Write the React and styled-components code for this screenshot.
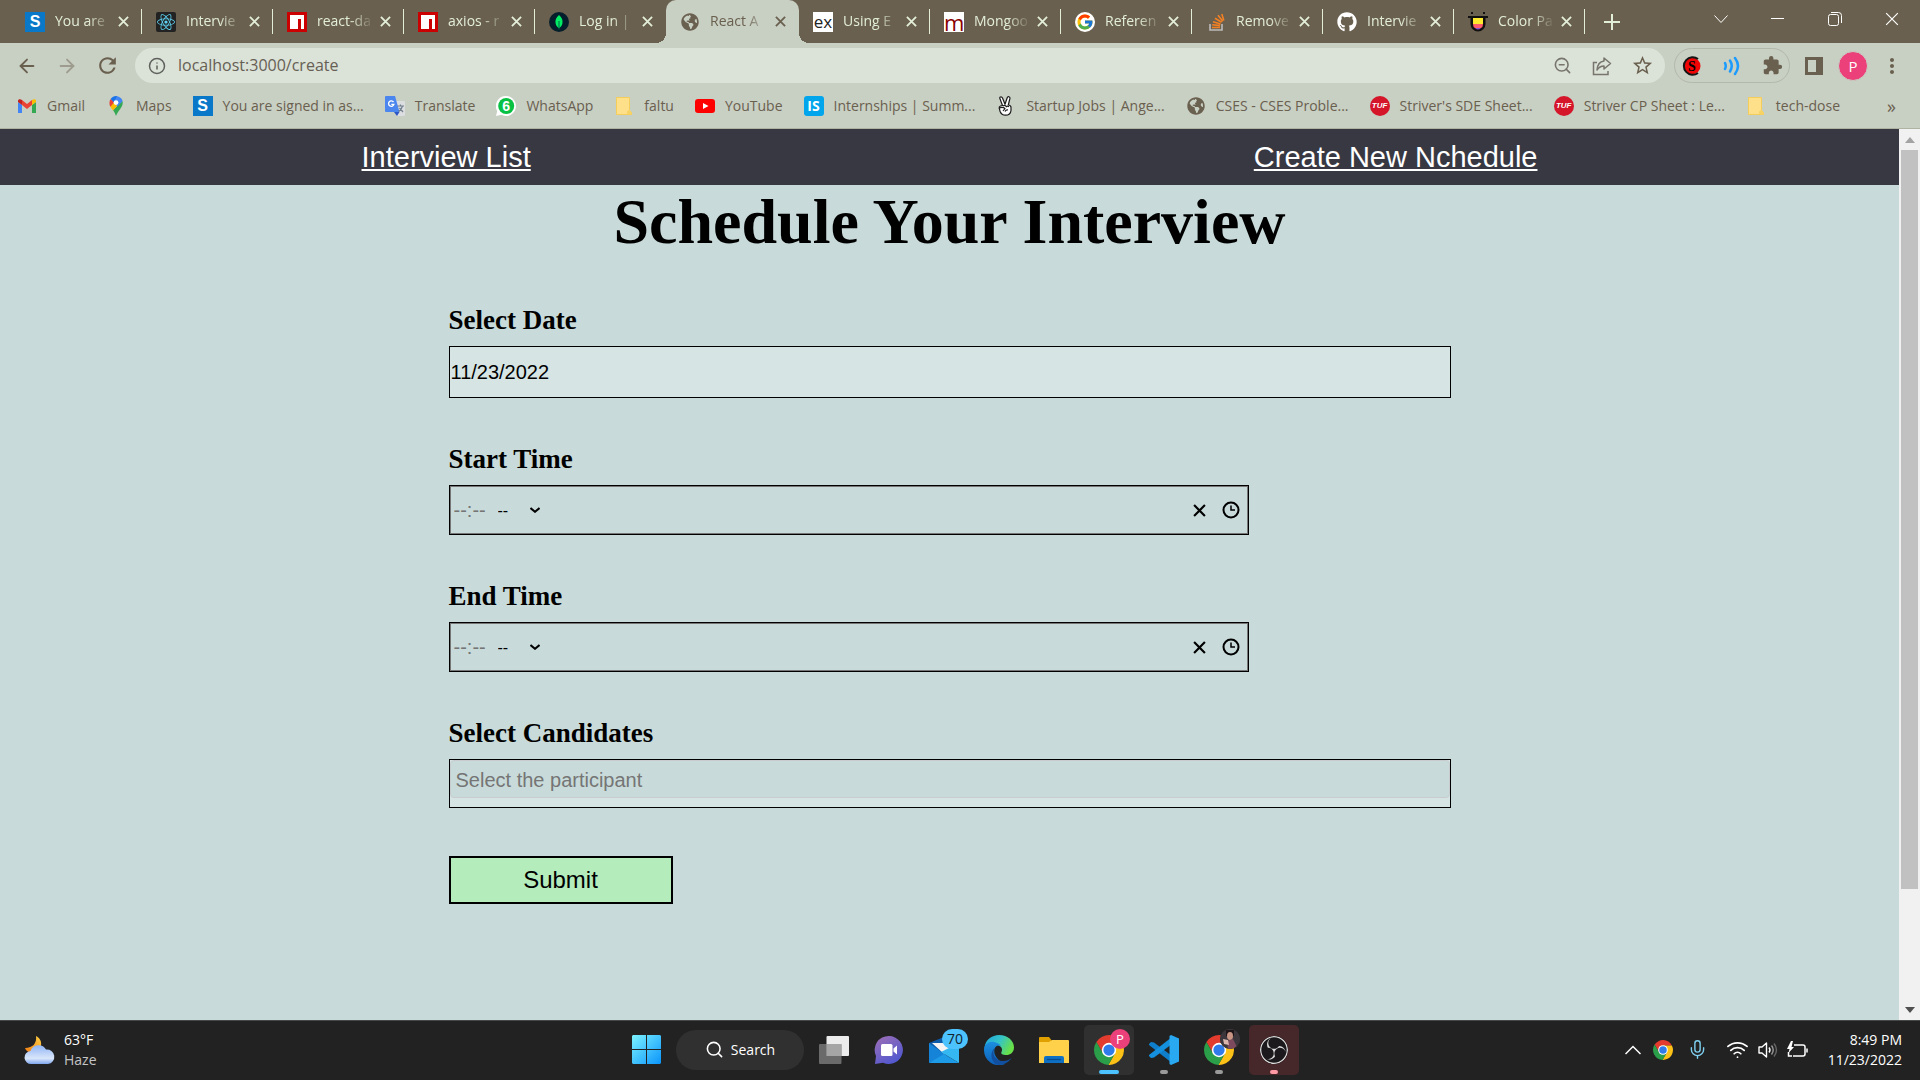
import React from 'react';
import styled, { createGlobalStyle, css } from 'styled-components';
import { ArrowLeft, ArrowRight, Info, ZoomOut, Search, Wifi, Mic } from 'lucide-react';
import { FaReact, FaGithub, FaGlobeAmericas } from 'react-icons/fa';
import { FcGoogle } from 'react-icons/fc';
import { SiObsstudio } from 'react-icons/si';
import { MdRefresh, MdExtension, MdStarBorder, MdMoreVert } from 'react-icons/md';

const ui = '"Open Sans", "Noto Sans", sans-serif';
const arial = '"Liberation Sans", Arial, sans-serif';
const times = '"Liberation Serif", "Times New Roman", serif';

const color = {
  frame: '#6a604f',
  bar: '#c8cfc3',
  omnibox: '#dbe2d8',
  ink: '#6a604f',
  tabText: '#e3eed9',
  page: '#c8dbda',
  nav: '#383842',
  field: '#d6e4e4',
  taskbar: '#222222',
};

const Global = createGlobalStyle`
  * { box-sizing: border-box; }
  body { margin: 0; background: ${color.page}; overflow: hidden; }
  button { border: 0; padding: 0; margin: 0; background: none; color: inherit; font: inherit; }
  input, select { border: 0; padding: 0; margin: 0; outline: 0; background: none; border-radius: 0; }
  svg { display: block; flex: none; }
`;

const Screen = styled.div`
  display: flex;
  flex-direction: column;
  height: 100vh;
  font-family: ${ui};
`;

/* Tab strip */

const TabStrip = styled.div`
  display: flex;
  flex: none;
  height: 43px;
  padding-left: 11px;
  background: ${color.frame};
`;

const Tab = styled.div`
  position: relative;
  display: flex;
  align-items: center;
  width: 131px;
  padding: 0 13px 0 14px;
  color: ${color.tabText};
  ${(p) =>
    p.$divider &&
    css`
      &::after {
        content: '';
        position: absolute;
        right: 0;
        top: 9px;
        width: 1px;
        height: 25px;
        background: ${color.tabText};
      }
    `}
  ${(p) =>
    p.$active &&
    css`
      width: 133px;
      color: ${color.ink};
      background: ${color.bar};
      border-radius: 10px 10px 0 0;
      &::before,
      &::after {
        content: '';
        position: absolute;
        bottom: 0;
        width: 10px;
        height: 10px;
      }
      &::before {
        left: -10px;
        background: radial-gradient(circle at 0 0, transparent 10px, ${color.bar} 10px);
      }
      &::after {
        right: -10px;
        background: radial-gradient(circle at 100% 0, transparent 10px, ${color.bar} 10px);
      }
    `}
`;

const TabTitle = styled.span`
  flex: 1;
  margin: 0 4px 2px 10px;
  overflow: hidden;
  white-space: nowrap;
  font-size: 14px;
  line-height: 20px;
  mask-image: linear-gradient(90deg, #000 56%, transparent 96%);
`;

const TabClose = styled.button`
  width: 11px;
  height: 11px;
`;

const NewTab = styled.button`
  display: grid;
  place-items: center;
  width: 54px;
  color: ${color.tabText};
`;

const WindowControls = styled.div`
  display: flex;
  margin-left: auto;
  height: 37px;
  color: #fff;
`;

const WindowButton = styled.button`
  display: grid;
  place-items: center;
  width: 57px;
`;

/* Toolbar */

const Toolbar = styled.div`
  display: flex;
  flex: none;
  align-items: center;
  gap: 9px;
  height: 45px;
  padding: 0 13px 0 12px;
  background: ${color.bar};
  color: ${color.ink};
`;

const IconRow = styled.div`
  display: flex;
  align-items: center;
  gap: 10px;
`;

const IconButton = styled.button`
  display: grid;
  place-items: center;
  width: 30px;
  height: 30px;
  opacity: ${(p) => (p.$dim ? 0.45 : 1)};
`;

const Omnibox = styled.div`
  display: flex;
  flex: 1;
  align-items: center;
  height: 35px;
  margin-left: 4px;
  padding: 0 8px 0 13px;
  border-radius: 18px;
  background: ${color.omnibox};
`;

const Address = styled.input`
  flex: 1;
  height: 30px;
  padding: 0 12px 1px;
  font: 16px ${ui};
  color: #665f54;
`;

const Extensions = styled(IconRow)`
  height: 35px;
  padding: 0 2px;
  border: 1px solid #b3b9aa;
  border-radius: 18px;
`;

const Avatar = styled.button`
  width: 30px;
  height: 30px;
  border: 1px solid ${color.bar};
  border-radius: 50%;
  background: #ec407a;
  color: #fff;
  font-size: 15px;
`;

const Bookmarks = styled.nav`
  display: flex;
  flex: none;
  align-items: center;
  gap: 21px;
  height: 41px;
  padding: 0 24px 4px 17px;
  border-bottom: 1px solid #afb4a2;
  background: ${color.bar};
`;

const Bookmark = styled.a`
  display: flex;
  align-items: center;
  gap: 10px;
  color: ${color.ink};
  font-size: 14px;
  line-height: 20px;
  white-space: nowrap;
  text-decoration: none;
`;

const More = styled.button`
  margin-left: auto;
  color: ${color.ink};
  font-size: 18px;
  line-height: 20px;
`;

/* Page */

const Viewport = styled.div`
  display: flex;
  flex: 1;
  min-height: 0;
`;

const Page = styled.div`
  flex: 1;
  overflow: hidden;
  background: ${color.page};
`;

const SiteNav = styled.nav`
  display: flex;
  align-items: center;
  justify-content: space-around;
  height: 56px;
  background: ${color.nav};
`;

const SiteLink = styled.a`
  color: #fff;
  font: 29px/34px ${arial};
  text-decoration: underline;
`;

const Title = styled.h1`
  margin: 0;
  font: bold 64px/74px ${times};
  text-align: center;
  color: #000;
`;

const Form = styled.form`
  width: min(1002px, 100%);
  margin: 0 auto;
  padding-top: 46px;
`;

const Fields = styled.div`
  display: flex;
  flex-direction: column;
  gap: 46px;
`;

const Field = styled.div`
  display: flex;
  flex-direction: column;
  align-items: flex-start;
  gap: 11px;
`;

const Label = styled.label`
  font: bold 27px/30px ${times};
  color: #000;
`;

const DateInput = styled.input`
  width: 100%;
  height: 52px;
  padding: 0 1px;
  border: 1px solid #000;
  background: ${color.field};
  font: 20px ${arial};
  color: #000;
`;

const TimeBox = styled.div`
  display: flex;
  align-items: center;
  width: min(800px, 100%);
  height: 50px;
  padding: 0 2px 0 4px;
  border: 1px solid #000;
  box-shadow: inset 0 0 0 1px #767676;
`;

const TimeInput = styled.input`
  width: 44px;
  font: 20px ${arial};
  color: #000;
  &::placeholder {
    color: #757575;
    opacity: 1;
  }
`;

const Meridiem = styled.select`
  appearance: none;
  width: 32px;
  font: 16px ${arial};
  color: #000;
`;

const TimeActions = styled.div`
  display: flex;
  gap: 1px;
  margin-left: auto;
`;

const ParticipantBox = styled.div`
  width: 100%;
  height: 49px;
  border: 1px solid #000;
  background: ${color.field};
`;

const ParticipantInput = styled.input`
  display: block;
  width: 100%;
  height: 38px;
  padding: 2px 5px 0;
  border: 1px solid #c9cccf;
  border-radius: 4px;
  background: ${color.page};
  font: 20px ${arial};
  &::placeholder {
    color: #757575;
    opacity: 1;
  }
`;

const Submit = styled.button`
  width: 224px;
  height: 48px;
  margin-top: 48px;
  border: 2px solid #000;
  background: #b4ecbc;
  color: #000;
  font: 24px ${arial};
`;

const ScrollTrack = styled.div`
  display: flex;
  flex-direction: column;
  align-items: center;
  width: 21px;
  background: #f1f1f1;
`;

const ScrollArrow = styled.button`
  display: grid;
  place-items: center;
  width: 21px;
  height: 21px;
  color: ${(p) => (p.$dim ? '#a3a3a3' : '#505050')};
`;

const ScrollRun = styled.div`
  flex: 1;
  width: 17px;
`;

const ScrollThumb = styled.div`
  height: 87%;
  background: #c1c1c1;
`;

/* Taskbar */

const Taskbar = styled.footer`
  display: grid;
  grid-template-columns: 1fr auto 1fr;
  align-items: center;
  flex: none;
  height: 60px;
  padding: 0 18px 2px;
  border-top: 1px solid #454847;
  background: ${color.taskbar};
  color: #fff;
  font-size: 14px;
  line-height: 20px;
`;

const Weather = styled.div`
  display: flex;
  align-items: center;
  gap: 8px;
  padding-left: 6px;
`;

const Muted = styled.div`
  color: #c4c4c4;
`;

const Apps = styled.div`
  display: flex;
  align-items: center;
  gap: 5px;
`;

const App50 = styled.button`
  position: relative;
  display: grid;
  place-items: center;
  width: 50px;
  height: 50px;
  border-radius: 5px;
  background: ${(p) => p.$tile || 'none'};
  ${(p) =>
    p.$mark &&
    css`
      &::after {
        content: '';
        position: absolute;
        left: 50%;
        bottom: 1px;
        width: ${p.$wide ? 20 : 8}px;
        height: 4px;
        transform: translateX(-50%);
        border-radius: 2px;
        background: ${p.$mark};
      }
    `}
`;

const SearchPill = styled.button`
  display: flex;
  align-items: center;
  justify-content: center;
  gap: 7px;
  width: 128px;
  height: 40px;
  border-radius: 20px;
  background: #303030;
`;

const CountBadge = styled.span`
  position: absolute;
  top: 4px;
  right: 1px;
  width: 26px;
  border-radius: 10px;
  background: #4cc2ff;
  color: #10222c;
  font-size: 14px;
  line-height: 20px;
`;

const ProfileBadge = styled.span`
  position: absolute;
  top: 4px;
  right: 4px;
  width: 20px;
  height: 20px;
  border-radius: 50%;
  background: ${(p) => p.$fill};
  font-size: 13px;
  line-height: 20px;
  overflow: hidden;
`;

const Tray = styled.div`
  display: flex;
  align-items: center;
  justify-content: flex-end;
`;

const TrayIcon = styled.button`
  display: grid;
  place-items: center;
  width: ${(p) => (p.$wide ? 40 : 30)}px;
  height: 40px;
`;

const SystemIcons = styled.div`
  display: flex;
  margin: 0 15px 0 5px;
`;

const Clock = styled.div`
  text-align: right;
`;

/* Drawings */

const Cross = ({ size = 11, w = 2 }) => (
  <svg width={size} height={size} viewBox="0 0 12 12" stroke="currentColor" strokeWidth={w}>
    <path d="M1 1l10 10M11 1L1 11" />
  </svg>
);

const Letter = styled.span`
  display: grid;
  place-items: center;
  flex: none;
  width: 20px;
  height: 20px;
  border-radius: ${(p) => p.$radius || '0'};
  background: ${(p) => p.$bg || 'none'};
  color: ${(p) => p.$fg || '#fff'};
  font: ${(p) => p.$font || `bold 16px ${arial}`};
  line-height: 18px;
  overflow: hidden;
`;

const SIcon = () => <Letter $bg="#0a78c8">S</Letter>;

const GlobeIcon = () => (
  <Letter $fg={color.ink}>
    <FaGlobeAmericas size={18} />
  </Letter>
);

const NpmIcon = () => (
  <svg width="20" height="20" viewBox="0 0 20 20">
    <path fill="#cb0000" d="M0 0h20v20H0z" />
    <path fill="#fff" d="M3 3h14v14h-3V7h-3v10H3z" />
  </svg>
);

const ReactIcon = () => (
  <Letter $bg="#222" $radius="2px">
    <FaReact size={18} color="#5ed3f3" />
  </Letter>
);

const MongoIcon = () => (
  <svg width="20" height="20" viewBox="0 0 20 20">
    <circle cx="10" cy="10" r="10" fill="#061e2b" />
    <path fill="#00ed64" d="M10 3c3 3 4 5 3.400 8.500C13 13.800 11.500 15 10.300 16h-.6C8.500 15 7 13.800 6.600 11.500 6 8 7 6 10 3z" />
    <path stroke="#00684a" strokeWidth="1" d="M10 9v8.500" />
  </svg>
);

const StackIcon = () => (
  <svg width="20" height="20" viewBox="0 0 20 20" fill="none" strokeWidth="1.600">
    <path stroke="#bcbbbb" d="M4 12v6h12v-6" />
    <path stroke="#f48024" d="M6 15.500h8M6.200 12.800l7.900.8M7 9.800l7.500 2.200M9 6.200l6.600 4M12 3.200l4.800 6M15.800 2l2 6.500" />
  </svg>
);

const TongueIcon = () => (
  <svg width="20" height="20" viewBox="0 0 20 20">
    <path fill="#111" d="M0 4h20v2h-2.500v6a7.500 7.500 0 0 1-15 0V6H0zM3 0h2v2H3zM15 0h2v2h-2z" />
    <path fill="#ffe92e" d="M5 6h10v6H5z" />
    <path fill="#ff5d6c" d="M5 12h10q0 3-2 4H7q-2-1-2-4z" />
    <path fill="#8a4fd0" d="M7 16h6q-3 3-6 0z" />
  </svg>
);

const GmailIcon = () => (
  <svg width="20" height="20" viewBox="0 0 20 20">
    <path fill="#4285f4" d="M1 17V6l4 3v8z" />
    <path fill="#34a853" d="M15 17V9l4-3v11z" />
    <path fill="#ea4335" d="M5 9V4l5 4 5-4v5l-5 4z" />
    <path fill="#c5221f" d="M1 6V5c0-2 2-2.500 4-1v5z" />
    <path fill="#fbbc04" d="M19 6V5c0-2-2-2.500-4-1v5z" />
  </svg>
);

const MapsIcon = () => (
  <svg width="20" height="20" viewBox="0 0 20 20">
    <path fill="#34a853" d="M16.500 5C18 11 12 14 10 20c-.6-2-1.600-4-3-6z" />
    <path fill="#fbbc04" d="M4.300 10.500L8 5l4 4-5 5.500c-1-1.500-2-2.500-2.700-4z" />
    <path fill="#ea4335" d="M4.600 3L8.500 6 4.300 10.700C3 8 3.200 5 4.600 3z" />
    <path fill="#1a73e8" d="M4.600 3C6 1 8 0 10 0l1.500.2L8 6.500z" />
    <path fill="#4285f4" d="M11.500.2C14 .8 16 2.500 16.600 5l-5 5.500L8 6z" />
    <circle cx="10" cy="6.600" r="2.400" fill="#fff" />
  </svg>
);

const TranslateIcon = () => (
  <svg width="20" height="20" viewBox="0 0 20 20">
    <path fill="#dcdde0" d="M7 5h12q1 0 1 1v13q0 1-1 1h-7z" />
    <path fill="#4a86ee" d="M1 0h9l4.500 16H1q-1 0-1-1V1q0-1 1-1z" />
    <path fill="#2b56c5" d="M9 16h5.500L12 20z" />
    <path fill="none" stroke="#fff" strokeWidth="1.300" d="M8.500 6a2.700 2.700 0 1 0 .4 2.300H6.300" />
    <path fill="none" stroke="#6f7f8c" strokeWidth="1.200" d="M12.500 10H19M15.500 8.500V10M17.500 10q-1 4-4 5.500M14.500 12l3.500 4" />
  </svg>
);

const WhatsAppIcon = () => (
  <svg width="20" height="20" viewBox="0 0 20 20">
    <path fill="#fff" d="M10 0a10 10 0 1 1-4.800 18.800L0 20l1.200-5A10 10 0 0 1 10 0z" />
    <circle cx="10.200" cy="10" r="8" fill="#08c143" />
    <text x="10.200" y="15" textAnchor="middle" fill="#fff" fontFamily={arial} fontWeight="700" fontSize="14">6</text>
  </svg>
);

const FolderIcon = () => (
  <svg width="20" height="20" viewBox="0 0 20 20">
    <path fill="#ffe08a" stroke="#f4cd5b" d="M2.500 1.500h13v13l2 2v2h-15z" />
    <path fill="#f7d365" d="M13 18.500v-3l2.500-2 2 3v2z" />
  </svg>
);

const YouTubeIcon = () => (
  <svg width="20" height="20" viewBox="0 0 20 20">
    <rect y="3" width="20" height="14" rx="3" fill="#f00" />
    <path fill="#fff" d="M8 7l5.500 3L8 13z" />
  </svg>
);

const VictoryIcon = () => (
  <svg width="20" height="20" viewBox="0 0 20 20" fill="#fff" stroke="#1c1c1c" strokeWidth="1.200" strokeLinejoin="round">
    <path d="M6.500 9.500L3.800 2.300Q3.700.8 5 .8 6 .8 6.500 2L9 8.200 11.300 1.500Q12 .4 13 .7q1.200.4.900 1.800L12.300 9q2.700.2 2.700 2.500v3q-.5 4.700-5.500 4.700-4 0-5.500-4L3.200 12q0-2.200 3.300-2.500z" />
    <path fill="none" d="M3.500 12q3-1.500 5.500.5l-2 2.500M7 10q2-1.500 3 .5M10 11q1.500-1.700 3-.2M9 15.500q1-2 3-1.500" />
  </svg>
);

const TufIcon = () => (
  <Letter $bg="#d4152a" $radius="50%" $font={`italic bold 8px ${arial}`}>TUF</Letter>
);

const ShareIcon = () => (
  <svg width="20" height="20" viewBox="0 0 20 20" fill="none" stroke="#77756c" strokeWidth="1.500">
    <path d="M5 6.500H1.500v12H16V15" />
    <path strokeLinejoin="round" d="M12 2l6.500 5.500L12 13v-3c-3 0-5 1-7 4 .4-5 3-8.500 7-9z" />
  </svg>
);

const SBadge = () => (
  <svg width="20" height="20" viewBox="0 0 20 20">
    <circle cx="10" cy="10" r="8.500" fill="#f00404" />
    <path fill="none" stroke="#151515" strokeWidth="2" d="M16 3A8.800 8.800 0 1 0 16 17" />
    <text x="10" y="15" textAnchor="middle" fontFamily={times} fontWeight="700" fontSize="14">S</text>
  </svg>
);

const WavesIcon = () => (
  <svg width="20" height="20" viewBox="0 0 20 20" fill="none" stroke="#1a9bff" strokeWidth="2.500" strokeLinecap="round">
    <path d="M3 7q1.500 3 0 6M8 4.500q3.500 5.500 0 11M13 2q6 8 0 16" />
  </svg>
);

const PanelIcon = () => (
  <svg width="18" height="18" viewBox="0 0 18 18">
    <path fill={color.ink} d="M0 0h18v18H0z" />
    <path fill={color.bar} d="M3 3h8v12H3z" />
  </svg>
);

const ClockFace = () => (
  <svg width="18" height="18" viewBox="0 0 18 18" fill="none" stroke="#000" strokeWidth="2">
    <circle cx="9" cy="9" r="7.500" />
    <path strokeWidth="1.500" d="M9 4.500V9h4" />
  </svg>
);

const ChevronSmall = () => (
  <svg width="10" height="6" viewBox="0 0 10 6" fill="none" stroke="#000" strokeWidth="2">
    <path d="M.5 1L5 4.800 9.500 1" />
  </svg>
);

const Triangle = ({ down }) => (
  <svg width="10" height="6" viewBox="0 0 10 6" fill="currentColor">
    <path d={down ? 'M0 0h10L5 6z' : 'M0 6h10L5 0z'} />
  </svg>
);

const ChromeIcon = ({ size }) => (
  <svg width={size} height={size} viewBox="0 0 48 48">
    <path fill="#e33b2e" d="M3.800 11.050A24 24 0 0 1 45.300 13H24l-9.500 16.500z" />
    <path fill="#fbc116" d="M45.300 13A24 24 0 0 1 22.900 47.950L33.500 29.500 24 13z" />
    <path fill="#2a9e48" d="M22.900 47.950A24 24 0 0 1 3.800 11.050L14.500 29.500h19z" />
    <circle cx="24" cy="24" r="11.500" fill="#fff" />
    <circle cx="24" cy="24" r="9" fill="#2f7bea" />
  </svg>
);

const WeatherIcon = () => (
  <svg width="32" height="32" viewBox="0 0 32 32">
    <defs>
      <linearGradient id="moon" x1="1" y1="0" x2="0" y2="1">
        <stop stopColor="#ffd044" />
        <stop offset="1" stopColor="#f07a12" />
      </linearGradient>
      <linearGradient id="cloud" x1="0" y1="0" x2="0" y2="1">
        <stop stopColor="#8fb4f3" />
        <stop offset=".7" stopColor="#d9e6fb" />
        <stop offset="1" stopColor="#7ea6ee" />
      </linearGradient>
    </defs>
    <path fill="url(#moon)" d="M12 2c8 4 6 14-1 17C6 20 2 17 1 14c8 0 12-5 11-12z" />
    <path fill="url(#cloud)" d="M7.500 30a6.500 6.500 0 0 1-1-13 8.500 8.500 0 0 1 15.500-1.500A7.300 7.300 0 0 1 24 30z" />
  </svg>
);

const WindowsIcon = () => (
  <svg width="29" height="29" viewBox="0 0 29 29">
    <defs>
      <linearGradient id="win" x1="0" y1="0" x2="1" y2="1">
        <stop stopColor="#7df3ff" />
        <stop offset="1" stopColor="#0a94fb" />
      </linearGradient>
    </defs>
    <path fill="url(#win)" d="M1 0h13v14H0V1zM15 0h13l1 1v13H15zM0 15h14v14H1l-1-1zM15 15h14v13l-1 1H15z" />
  </svg>
);

const TaskViewIcon = () => (
  <svg width="30" height="28" viewBox="0 0 30 28">
    <rect x="7.500" width="22.500" height="20" rx="1" fill="#ececec" />
    <rect y="8" width="22.500" height="20" rx="1" fill="#777" fillOpacity=".85" />
    <path fill="#a5a5a5" d="M7.500 8h15v12h-15z" />
  </svg>
);

const ChatIcon = () => (
  <svg width="30" height="30" viewBox="0 0 30 30">
    <defs>
      <linearGradient id="chat" x1="0" y1="0" x2=".6" y2="1">
        <stop stopColor="#a06fb5" />
        <stop offset="1" stopColor="#5258cf" />
      </linearGradient>
    </defs>
    <path fill="url(#chat)" d="M15 1a14 14 0 1 1-6 26.700L1 29l1-8A14 14 0 0 1 15 1z" />
    <rect x="7" y="9" width="11.500" height="12" rx="1.500" fill="#fff" />
    <path fill="#fff" d="M19.500 13.500l3.500-3v9l-3.500-3z" />
  </svg>
);

const MailIcon = () => (
  <svg width="30" height="26" viewBox="0 0 30 26">
    <path fill="#0b5ba8" d="M0 6L15 0l15 6v9H0z" />
    <path fill="#f4f4f4" d="M3 6h24l-12 11z" />
    <path fill="#1583d8" d="M0 6l18 13L0 26z" />
    <path fill="#35b8f2" d="M30 6v20L12 15z" />
    <path fill="#1d9be6" d="M0 26l15-9 15 9z" />
  </svg>
);

const EdgeIcon = () => (
  <svg width="30" height="30" viewBox="0 0 30 30">
    <defs>
      <linearGradient id="edgeTop" x1="0" y1="0" x2="1" y2=".4">
        <stop stopColor="#1fa6e0" />
        <stop offset=".55" stopColor="#35c4c8" />
        <stop offset="1" stopColor="#67e04a" />
      </linearGradient>
      <linearGradient id="edgeLow" x1="0" y1="0" x2="0" y2="1">
        <stop stopColor="#1b8fe0" />
        <stop offset="1" stopColor="#0d5fb8" />
      </linearGradient>
    </defs>
    <path fill="url(#edgeTop)" d="M.5 13C1 5 8 0 15 0c9 0 15 6 15 12.500 0 5-4 7.500-7.500 7.500-4 0-6-1-5-3 2-4-1.500-7-5.500-7-6 0-10 3-11.500 3z" />
    <path fill="url(#edgeLow)" d="M0 15C0 9 5 6 10 7c4 .5 6 2.500 7 4-6-2-8 4-6 9 2 4.500 6 7 10 9a15 15 0 0 1-21-14z" />
    <path fill="#12509f" d="M11 13c-4 5 0 13 8 13 4 0 6-1 8.500-3C25 27 20 30 15 30 7 29 5 17 11 13z" />
  </svg>
);

const ExplorerIcon = () => (
  <svg width="30" height="26" viewBox="0 0 30 26">
    <path fill="#e0a100" d="M0 1q0-1 1-1h9l3 4v5H0z" />
    <path fill="#ffd04a" d="M0 5h10l3-2h16q1 0 1 1v22H0z" />
    <path fill="#0f6fc2" d="M5 26v-5q0-2 2-2h16q2 0 2 2v5z" />
    <path stroke="#084a8c" strokeWidth="1.200" d="M8 22.500h14" />
  </svg>
);

const CodeIcon = () => (
  <svg width="30" height="30" viewBox="0 0 30 30">
    <path fill="#0f7fcb" d="M0 9l2-2 3 .5L23 21v7L0 10z" />
    <path fill="#1590df" d="M0 21l2 2 3-.5L23 9V2L0 20z" />
    <path fill="#29a9f2" d="M22 0l8 3.500v23L22 30l-1.500-1V1z" />
  </svg>
);

const ObsIcon = () => (
  <Letter as={ObsDisc}>
    <SiObsstudio size={28} color="#dedede" />
  </Letter>
);

const ObsDisc = styled.span`
  display: grid;
  place-items: center;
  width: 28px;
  height: 28px;
  border-radius: 50%;
  background: #1b191c;
`;

const Portrait = () => (
  <svg width="20" height="20" viewBox="0 0 20 20">
    <path fill="#3a363c" d="M0 0h20v20H0z" />
    <path fill="#1d1517" d="M6 1h8v6H6z" />
    <ellipse cx="10" cy="7" rx="3" ry="4" fill="#c99584" />
    <path fill="#7d4a5d" d="M7 12l6-2 5 10H8z" />
    <path fill="#d9b4ad" d="M3 10l5 1 1 5-5-1z" />
  </svg>
);

const SpeakerIcon = () => (
  <svg width="20" height="18" viewBox="0 0 20 18" fill="none" stroke="#fff" strokeWidth="1.400">
    <path strokeLinejoin="round" d="M1 6v6h3l4.500 4V2L4 6z" />
    <path d="M11 6.500q2 2.500 0 5" />
    <path stroke="#999" d="M13.500 4.500q3.500 4.500 0 9" />
    <path stroke="#666" d="M16 2.500q5 6.500 0 13" />
  </svg>
);

const BatteryIcon = () => (
  <svg width="22" height="18" viewBox="0 0 22 18" fill="none" stroke="#fff" strokeWidth="1.500">
    <path d="M7 4h9q2 0 2 2v7q0 2-2 2H6" />
    <path d="M1.500 11v4H5M20 7.500v4" />
    <path fill="#fff" strokeWidth="0" d="M4 0L0 8h2.500L1.500 12 7 6H4.500L6 0z" />
  </svg>
);

const tabs = [
  { title: 'You are', icon: <SIcon /> },
  { title: 'Intervie', icon: <ReactIcon /> },
  { title: 'react-da', icon: <NpmIcon /> },
  { title: 'axios - r', icon: <NpmIcon /> },
  { title: 'Log in |', icon: <MongoIcon /> },
  { title: 'React A', icon: <GlobeIcon />, active: true },
  { title: 'Using E', icon: <Letter $bg="#fff" $fg="#222" $font={`17px ${ui}`}>ex</Letter> },
  { title: 'Mongoo', icon: <Letter $bg="#fff" $fg="#880000" $font={`22px ${ui}`}>m</Letter> },
  { title: 'Referen', icon: <Letter $bg="#fff" $radius="50%"><FcGoogle size={18} /></Letter> },
  { title: 'Remove', icon: <StackIcon /> },
  { title: 'Intervie', icon: <FaGithub size={20} color="#fff" /> },
  { title: 'Color Pa', icon: <TongueIcon /> },
];

const bookmarks = [
  ['Gmail', <GmailIcon />],
  ['Maps', <MapsIcon />],
  ['You are signed in as...', <SIcon />],
  ['Translate', <TranslateIcon />],
  ['WhatsApp', <WhatsAppIcon />],
  ['faltu', <FolderIcon />],
  ['YouTube', <YouTubeIcon />],
  ['Internships | Summ...', <Letter $bg="#00a5ec" $radius="3px" $font={`bold 14px ${ui}`}>IS</Letter>],
  ['Startup Jobs | Ange...', <VictoryIcon />],
  ['CSES - CSES Proble...', <GlobeIcon />],
  ["Striver's SDE Sheet...", <TufIcon />],
  ['Striver CP Sheet : Le...', <TufIcon />],
  ['tech-dose', <FolderIcon />],
];

function BrowserTabs() {
  return (
    <TabStrip>
      {tabs.map((t, i) => (
        <Tab key={i} $active={t.active} $divider={!t.active && !(tabs[i + 1] && tabs[i + 1].active)}>
          {t.icon}
          <TabTitle>{t.title}</TabTitle>
          <TabClose aria-label="Close tab"><Cross /></TabClose>
        </Tab>
      ))}
      <NewTab aria-label="New tab">
        <svg width="16" height="16" viewBox="0 0 16 16" stroke="currentColor" strokeWidth="2">
          <path d="M8 0v16M0 8h16" />
        </svg>
      </NewTab>
      <WindowControls>
        <WindowButton aria-label="Search tabs">
          <svg width="14" height="8" viewBox="0 0 14 8" fill="none" stroke="currentColor">
            <path d="M.5.5L7 7.500 13.500.5" />
          </svg>
        </WindowButton>
        <WindowButton aria-label="Minimize">
          <svg width="13" height="2" viewBox="0 0 13 2"><path fill="currentColor" d="M0 0h13v1H0z" /></svg>
        </WindowButton>
        <WindowButton aria-label="Restore">
          <svg width="14" height="14" viewBox="0 0 14 14" fill="none" stroke="currentColor">
            <rect x=".5" y="2.500" width="10" height="11" rx="2" />
            <path d="M3 .5h7.500q3 0 3 3V11" />
          </svg>
        </WindowButton>
        <WindowButton aria-label="Close"><Cross size={14} w={1} /></WindowButton>
      </WindowControls>
    </TabStrip>
  );
}

function BrowserToolbar() {
  return (
    <Toolbar>
      <IconRow>
        <IconButton aria-label="Back"><ArrowLeft size={22} /></IconButton>
        <IconButton aria-label="Forward" $dim><ArrowRight size={22} /></IconButton>
        <IconButton aria-label="Reload"><MdRefresh size={25} /></IconButton>
      </IconRow>
      <Omnibox>
        <Info size={18} color="#5f625c" />
        <Address aria-label="Address" defaultValue="localhost:3000/create" />
        <IconRow>
          <IconButton aria-label="Zoom"><ZoomOut size={19} color="#77756c" /></IconButton>
          <IconButton aria-label="Share"><ShareIcon /></IconButton>
          <IconButton aria-label="Bookmark"><MdStarBorder size={23} /></IconButton>
        </IconRow>
      </Omnibox>
      <Extensions>
        <IconButton aria-label="Extension S"><SBadge /></IconButton>
        <IconButton aria-label="Extension audio"><WavesIcon /></IconButton>
        <IconButton aria-label="Extensions"><MdExtension size={21} /></IconButton>
      </Extensions>
      <IconButton aria-label="Side panel"><PanelIcon /></IconButton>
      <Avatar>P</Avatar>
      <IconButton aria-label="Menu"><MdMoreVert size={24} /></IconButton>
    </Toolbar>
  );
}

function TimeField({ id, label }) {
  return (
    <Field>
      <Label htmlFor={id}>{label}</Label>
      <TimeBox>
        <TimeInput id={id} placeholder="--:--" />
        <Meridiem aria-label={`${label} AM or PM`}>
          <option>--</option>
        </Meridiem>
        <ChevronSmall />
        <TimeActions>
          <IconButton type="button" aria-label="Clear"><Cross size={13} /></IconButton>
          <IconButton type="button" aria-label="Pick a time"><ClockFace /></IconButton>
        </TimeActions>
      </TimeBox>
    </Field>
  );
}

function InterviewForm() {
  return (
    <Form onSubmit={(e) => e.preventDefault()}>
      <Fields>
        <Field>
          <Label htmlFor="date">Select Date</Label>
          <DateInput id="date" defaultValue="11/23/2022" />
        </Field>
        <TimeField id="start" label="Start Time" />
        <TimeField id="end" label="End Time" />
        <Field>
          <Label htmlFor="candidates">Select Candidates</Label>
          <ParticipantBox>
            <ParticipantInput id="candidates" placeholder="Select the participant" />
          </ParticipantBox>
        </Field>
      </Fields>
      <Submit type="submit">Submit</Submit>
    </Form>
  );
}

function SystemTaskbar() {
  return (
    <Taskbar>
      <Weather>
        <WeatherIcon />
        <div>
          <div>63°F</div>
          <Muted>Haze</Muted>
        </div>
      </Weather>
      <Apps>
        <App50 aria-label="Start"><WindowsIcon /></App50>
        <SearchPill><Search size={19} />Search</SearchPill>
        <App50 aria-label="Task view"><TaskViewIcon /></App50>
        <App50 aria-label="Chat"><ChatIcon /></App50>
        <App50 aria-label="Mail"><MailIcon /><CountBadge>70</CountBadge></App50>
        <App50 aria-label="Edge"><EdgeIcon /></App50>
        <App50 aria-label="Files"><ExplorerIcon /></App50>
        <App50 aria-label="Chrome" $tile="#303030" $mark="#4cc2ff" $wide>
          <ChromeIcon size={30} />
          <ProfileBadge $fill="#ec407a">P</ProfileBadge>
        </App50>
        <App50 aria-label="Code editor" $mark="#9a9a9a"><CodeIcon /></App50>
        <App50 aria-label="Chrome, second profile" $mark="#9a9a9a">
          <ChromeIcon size={30} />
          <ProfileBadge $fill="#3a363c"><Portrait /></ProfileBadge>
        </App50>
        <App50 aria-label="Recorder" $tile="#46282a" $mark="#ff99a4"><ObsIcon /></App50>
      </Apps>
      <Tray>
        <TrayIcon aria-label="Hidden icons">
          <svg width="16" height="10" viewBox="0 0 16 10" fill="none" stroke="#fff" strokeWidth="1.500">
            <path d="M.5 9L8 1.500 15.500 9" />
          </svg>
        </TrayIcon>
        <TrayIcon aria-label="Chrome"><ChromeIcon size={20} /></TrayIcon>
        <TrayIcon aria-label="Microphone" $wide><Mic size={21} color="#7fd0f0" strokeWidth={1.6} /></TrayIcon>
        <SystemIcons>
          <TrayIcon aria-label="Network"><Wifi size={23} strokeWidth={1.8} /></TrayIcon>
          <TrayIcon aria-label="Volume"><SpeakerIcon /></TrayIcon>
          <TrayIcon aria-label="Battery"><BatteryIcon /></TrayIcon>
        </SystemIcons>
        <Clock>
          <div>8:49 PM</div>
          <div>11/23/2022</div>
        </Clock>
      </Tray>
    </Taskbar>
  );
}

export default function App() {
  return (
    <Screen>
      <Global />
      <BrowserTabs />
      <BrowserToolbar />
      <Bookmarks>
        {bookmarks.map(([name, icon]) => (
          <Bookmark key={name} href="#">{icon}{name}</Bookmark>
        ))}
        <More aria-label="More bookmarks">»</More>
      </Bookmarks>
      <Viewport>
        <Page>
          <SiteNav>
            <SiteLink href="#list">Interview List</SiteLink>
            <SiteLink href="#create">Create New Nchedule</SiteLink>
          </SiteNav>
          <Title>Schedule Your Interview</Title>
          <InterviewForm />
        </Page>
        <ScrollTrack>
          <ScrollArrow aria-label="Scroll up" $dim><Triangle /></ScrollArrow>
          <ScrollRun><ScrollThumb /></ScrollRun>
          <ScrollArrow aria-label="Scroll down"><Triangle down /></ScrollArrow>
        </ScrollTrack>
      </Viewport>
      <SystemTaskbar />
    </Screen>
  );
}
